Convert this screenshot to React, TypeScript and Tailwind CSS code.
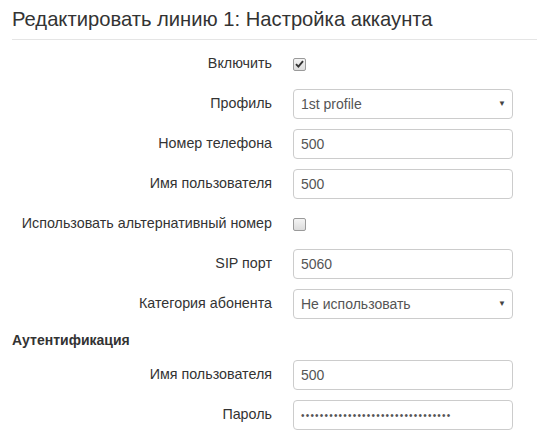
import React from "react";

type Row =
  | { kind: "check"; label: string; checked: boolean }
  | { kind: "input"; label: string; value: string; password?: boolean }
  | { kind: "select"; label: string; value: string };

const mainRows: Row[] = [
  { kind: "check", label: "Включить", checked: true },
  { kind: "select", label: "Профиль", value: "1st profile" },
  { kind: "input", label: "Номер телефона", value: "500" },
  { kind: "input", label: "Имя пользователя", value: "500" },
  { kind: "check", label: "Использовать альтернативный номер", checked: false },
  { kind: "input", label: "SIP порт", value: "5060" },
  { kind: "select", label: "Категория абонента", value: "Не использовать" },
];

const authRows: Row[] = [
  { kind: "input", label: "Имя пользователя", value: "500" },
  { kind: "input", label: "Пароль", value: "••••••••••••••••••••••••••••••••", password: true },
];

function Checkbox({ checked }: { checked: boolean }) {
  return (
    <span className="flex h-[13px] w-[13px] items-center justify-center rounded-[2px] border border-[#9a9a9a] bg-gradient-to-b from-[#f4f4f4] to-[#dcdcdc]">
      {checked && (
        <svg width="9" height="8" viewBox="0 0 9 8">
          <path d="M1 4.2 L3.4 6.6 L8 1.2" fill="none" stroke="#333" strokeWidth="1.9" />
        </svg>
      )}
    </span>
  );
}

function Field({ row }: { row: Row }) {
  return (
    <div className="mb-[10px] flex h-[30px] items-center">
      <label className="w-[260px] shrink-0 text-right text-[14.3px] text-[#333]">
        {row.label}
      </label>
      <div className="ml-[21px] flex w-[220px] items-center">
        {row.kind === "check" ? (
          <Checkbox checked={row.checked} />
        ) : (
          <div className="flex h-[30px] w-full items-center justify-between rounded-[4px] border border-[#ccc] bg-white pl-[7px] pr-[6px] text-[14px] text-[#555]">
            <span className={row.kind === "input" && row.password ? "text-[10px] tracking-[1.2px]" : ""}>
              {row.value}
            </span>
            {row.kind === "select" && (
              <span className="text-[8px] text-[#444]">▼</span>
            )}
          </div>
        )}
      </div>
    </div>
  );
}

export default function App() {
  return (
    <div
      className="h-[442px] w-[537px] overflow-hidden bg-white pl-[12px]"
      style={{ fontFamily: '"Liberation Sans", Arial, sans-serif' }}
    >
      <div className="mr-[-12px] border-b border-[#e5e5e5] pt-[9px] pb-[10px] text-[20.2px] leading-[20px] text-[#333]">
        Редактировать линию 1: Настройка аккаунта
      </div>
      <div className="pt-[9px]">
        {mainRows.map((r, i) => (
          <Field key={i} row={r} />
        ))}
        <div className="h-[31px] pt-[1px] text-[14px] font-bold text-[#333]">
          Аутентификация
        </div>
        {authRows.map((r, i) => (
          <Field key={i} row={r} />
        ))}
      </div>
    </div>
  );
}
